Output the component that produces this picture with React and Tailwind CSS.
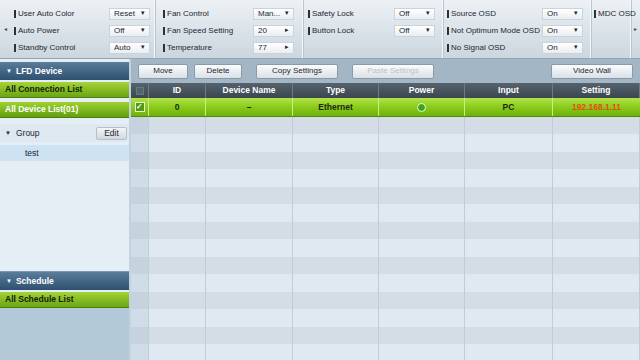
import React from "react";

const F = { fontFamily: '"Liberation Sans", Arial, sans-serif' };

function Label({ children }) {
  return (
    <div className="flex items-center gap-[2px] text-[8px] text-[#1d2730] whitespace-nowrap">
      <span className="inline-block w-[2px] h-[8px] bg-[#2a333b]" />
      <span>{children}</span>
    </div>
  );
}

function Drop({ value, arrow = "▾" }) {
  return (
    <div className="w-[41px] h-[12px] shrink-0 flex items-center justify-between px-[4px] bg-gradient-to-b from-[#ffffff] to-[#e9eef2] border border-[#c9d3db] text-[8px] text-[#1d2730] whitespace-nowrap">
      <span>{value}</span>
      <span className="text-[7px]">{arrow}</span>
    </div>
  );
}

function Row({ label, value, arrow }) {
  return (
    <div className="h-[17px] flex items-center justify-between gap-[2px]">
      <Label>{label}</Label>
      {value !== undefined && <Drop value={value} arrow={arrow} />}
    </div>
  );
}

function Panel({ w, rows, pl = "pl-[4px]", pr = "pr-[4px]" }) {
  return (
    <div className={`${w} h-full ${pl} ${pr} pt-[5px] border-r border-[#f4f7f9] shadow-[1px_0_0_#b9c6d0]`}>
      {rows.map((r, i) => (
        <Row key={i} {...r} />
      ))}
    </div>
  );
}

function Btn({ children, w, disabled }) {
  return (
    <div
      className={`${w} h-[15px] flex items-center justify-center rounded-[2px] border border-[#8a9aa7] bg-gradient-to-b from-[#fbfcfd] to-[#d9e1e7] text-[8px] whitespace-nowrap ${disabled ? "text-[#b8c2ca]" : "text-[#1d2730]"}`}
    >
      {children}
    </div>
  );
}

const cols = ["w-[18px]", "w-[57px]", "w-[87px]", "w-[86px]", "w-[86px]", "w-[88px]", "w-[87px]"];

export default function App() {
  const rows = Array.from({ length: 14 });
  return (
    <div style={F} className="w-[640px] h-[360px] overflow-hidden bg-[#9fb3c3] flex flex-col">
      {/* Toolbar */}
      <div className="h-[59px] shrink-0 flex bg-gradient-to-b from-[#edf1f4] to-[#cbd6df] border-b border-[#93a6b5]">
        <div className="w-[10px] flex items-center justify-center text-[6px] text-[#3b4a57]">◂</div>
        <Panel
          w="w-[145px]"
          rows={[
            { label: "User Auto Color", value: "Reset" },
            { label: "Auto Power", value: "Off" },
            { label: "Standby Control", value: "Auto" },
          ]}
        />
        <Panel
          w="w-[148px]"
          pl="pl-[8px]"
          pr="pr-[8px]"
          rows={[
            { label: "Fan Control", value: "Man..." },
            { label: "Fan Speed Setting", value: "20", arrow: "▸" },
            { label: "Temperature", value: "77", arrow: "▸" },
          ]}
        />
        <Panel
          w="w-[140px]"
          pl="pl-[5px]"
          pr="pr-[7px]"
          rows={[
            { label: "Safety Lock", value: "Off" },
            { label: "Button Lock", value: "Off" },
          ]}
        />
        <Panel
          w="w-[148px]"
          pl="pl-[4px]"
          pr="pr-[7px]"
          rows={[
            { label: "Source OSD", value: "On" },
            { label: "Not Optimum Mode OSD", value: "On" },
            { label: "No Signal OSD", value: "On" },
          ]}
        />
        <div className="w-[40px] pl-[3px] pt-[5px] border-r border-[#f4f7f9] shadow-[1px_0_0_#b9c6d0]">
          <Row label="MDC OSD" />
        </div>
        <div className="flex-1 flex items-center justify-center text-[6px] text-[#3b4a57]">▸</div>
      </div>

      <div className="flex-1 flex">
        {/* Sidebar */}
        <div className="w-[131px] flex flex-col pt-[3px] border-r-2 border-[#c2d2de] bg-[#e6eef5]">
          <div className="h-[18px] flex items-center pl-[6px] gap-[4px] bg-gradient-to-b from-[#5a7d9c] to-[#2f5171] text-white text-[8.5px] font-bold">
            <span className="text-[6px]">▼</span>LFD Device
          </div>
          <div className="h-[2px] bg-[#e6eef5]" />
          <div className="h-[16px] flex items-center pl-[5px] bg-gradient-to-b from-[#a4d436] to-[#6aa512] text-[#14220a] text-[8.5px] font-bold border-b border-[#4f7d10]">
            All Connection List
          </div>
          <div className="h-[4px]" />
          <div className="h-[16px] flex items-center pl-[5px] bg-gradient-to-b from-[#9fd12e] to-[#62a010] text-white text-[8.5px] font-bold border-b border-[#4f7d10]">
            All Device List(01)
          </div>
          <div className="h-[6px]" />
          <div className="h-[18px] flex items-center justify-between pl-[5px] pr-[2px] bg-[#dde8f0]">
            <div className="flex items-center gap-[5px] text-[8.5px] text-[#1d2730]">
              <span className="text-[6px]">▼</span>Group
            </div>
            <div className="w-[31px] h-[13px] flex items-center justify-center rounded-[2px] bg-gradient-to-b from-[#f4f6f8] to-[#cfd8df] border border-[#b5c1ca] text-[8.5px] text-[#1d2730]">
              Edit
            </div>
          </div>
          <div className="h-[3px]" />
          <div className="h-[16px] flex items-center pl-[25px] bg-[#cde2f3] text-[8.5px] text-[#1d2730]">test</div>
          <div className="flex-1" />
          <div className="h-[19px] flex items-center pl-[6px] gap-[4px] bg-gradient-to-b from-[#5a7d9c] to-[#2f5171] text-white text-[8.5px] font-bold border-t border-[#7d98b0]">
            <span className="text-[6px]">▼</span>Schedule
          </div>
          <div className="h-[2px]" />
          <div className="h-[16px] flex items-center pl-[5px] bg-gradient-to-b from-[#a4d436] to-[#6aa512] text-[#14220a] text-[8.5px] font-bold border-b border-[#4f7d10]">
            All Schedule List
          </div>
          <div className="h-[54px] bg-[#b3c9d8]" />
        </div>

        {/* Main */}
        <div className="w-[509px] flex flex-col">
          <div className="h-[24px] shrink-0 flex items-center pl-[7px] pr-[7px] bg-[#a3b6c6]">
            <div className="flex gap-[6px]">
              <Btn w="w-[50px]">Move</Btn>
              <Btn w="w-[48px]">Delete</Btn>
              <div className="w-[2px]" />
              <Btn w="w-[82px]">Copy Settings</Btn>
              <div className="w-[2px]" />
              <Btn w="w-[82px]" disabled>Paste Settings</Btn>
            </div>
            <div className="flex-1" />
            <Btn w="w-[82px]">Video Wall</Btn>
          </div>
          <div className="h-[15px] shrink-0 flex bg-gradient-to-b from-[#56626c] to-[#3b4750] text-white text-[8.5px] font-bold">
            {["", "ID", "Device Name", "Type", "Power", "Input", "Setting"].map((h, i) => (
              <div key={i} className={`${cols[i]} flex items-center justify-center border-r border-[#6d7a84]`}>
                {i === 0 ? <span className="w-[8px] h-[8px] bg-[#56626c] border border-[#6b7781]" /> : h}
              </div>
            ))}
          </div>
          <div className="h-[19px] shrink-0 flex bg-gradient-to-b from-[#b3e446] via-[#8acb1a] to-[#6fb010] text-[#1a2a08] text-[8.5px] font-bold border-b border-[#4f8a0a]">
            <div className={`${cols[0]} flex items-center justify-center border-r border-[#c8ec86]`}>
              <span className="w-[10px] h-[10px] flex items-center justify-center bg-[#4f9a10] border border-[#e8f5d0] text-white text-[8px] leading-none">✓</span>
            </div>
            <div className={`${cols[1]} flex items-center justify-center border-r border-[#c8ec86]`}>0</div>
            <div className={`${cols[2]} flex items-center justify-center border-r border-[#c8ec86]`}>–</div>
            <div className={`${cols[3]} flex items-center justify-center border-r border-[#c8ec86]`}>Ethernet</div>
            <div className={`${cols[4]} flex items-center justify-center border-r border-[#c8ec86]`}>
              <span className="w-[9px] h-[9px] rounded-full bg-[#3fa515] border border-[#f0fae0]" />
            </div>
            <div className={`${cols[5]} flex items-center justify-center border-r border-[#c8ec86]`}>PC</div>
            <div className={`${cols[6]} flex items-center justify-center text-[#e2500e]`}>192.168.1.11</div>
          </div>
          {rows.map((_, r) => (
            <div key={r} className={`${r % 2 === 0 ? "h-[17px] bg-[#d4dde5]" : "h-[18px] bg-[#e0e9f2]"} flex shrink-0`}>
              {cols.map((c, i) => (
                <div
                  key={i}
                  className={`${c} border-r border-[#c2ccd4] ${i === 0 ? (r % 2 === 0 ? "bg-[#c6d3de]" : "bg-[#d0dce7]") : ""}`}
                />
              ))}
            </div>
          ))}
        </div>
      </div>
    </div>
  );
}
